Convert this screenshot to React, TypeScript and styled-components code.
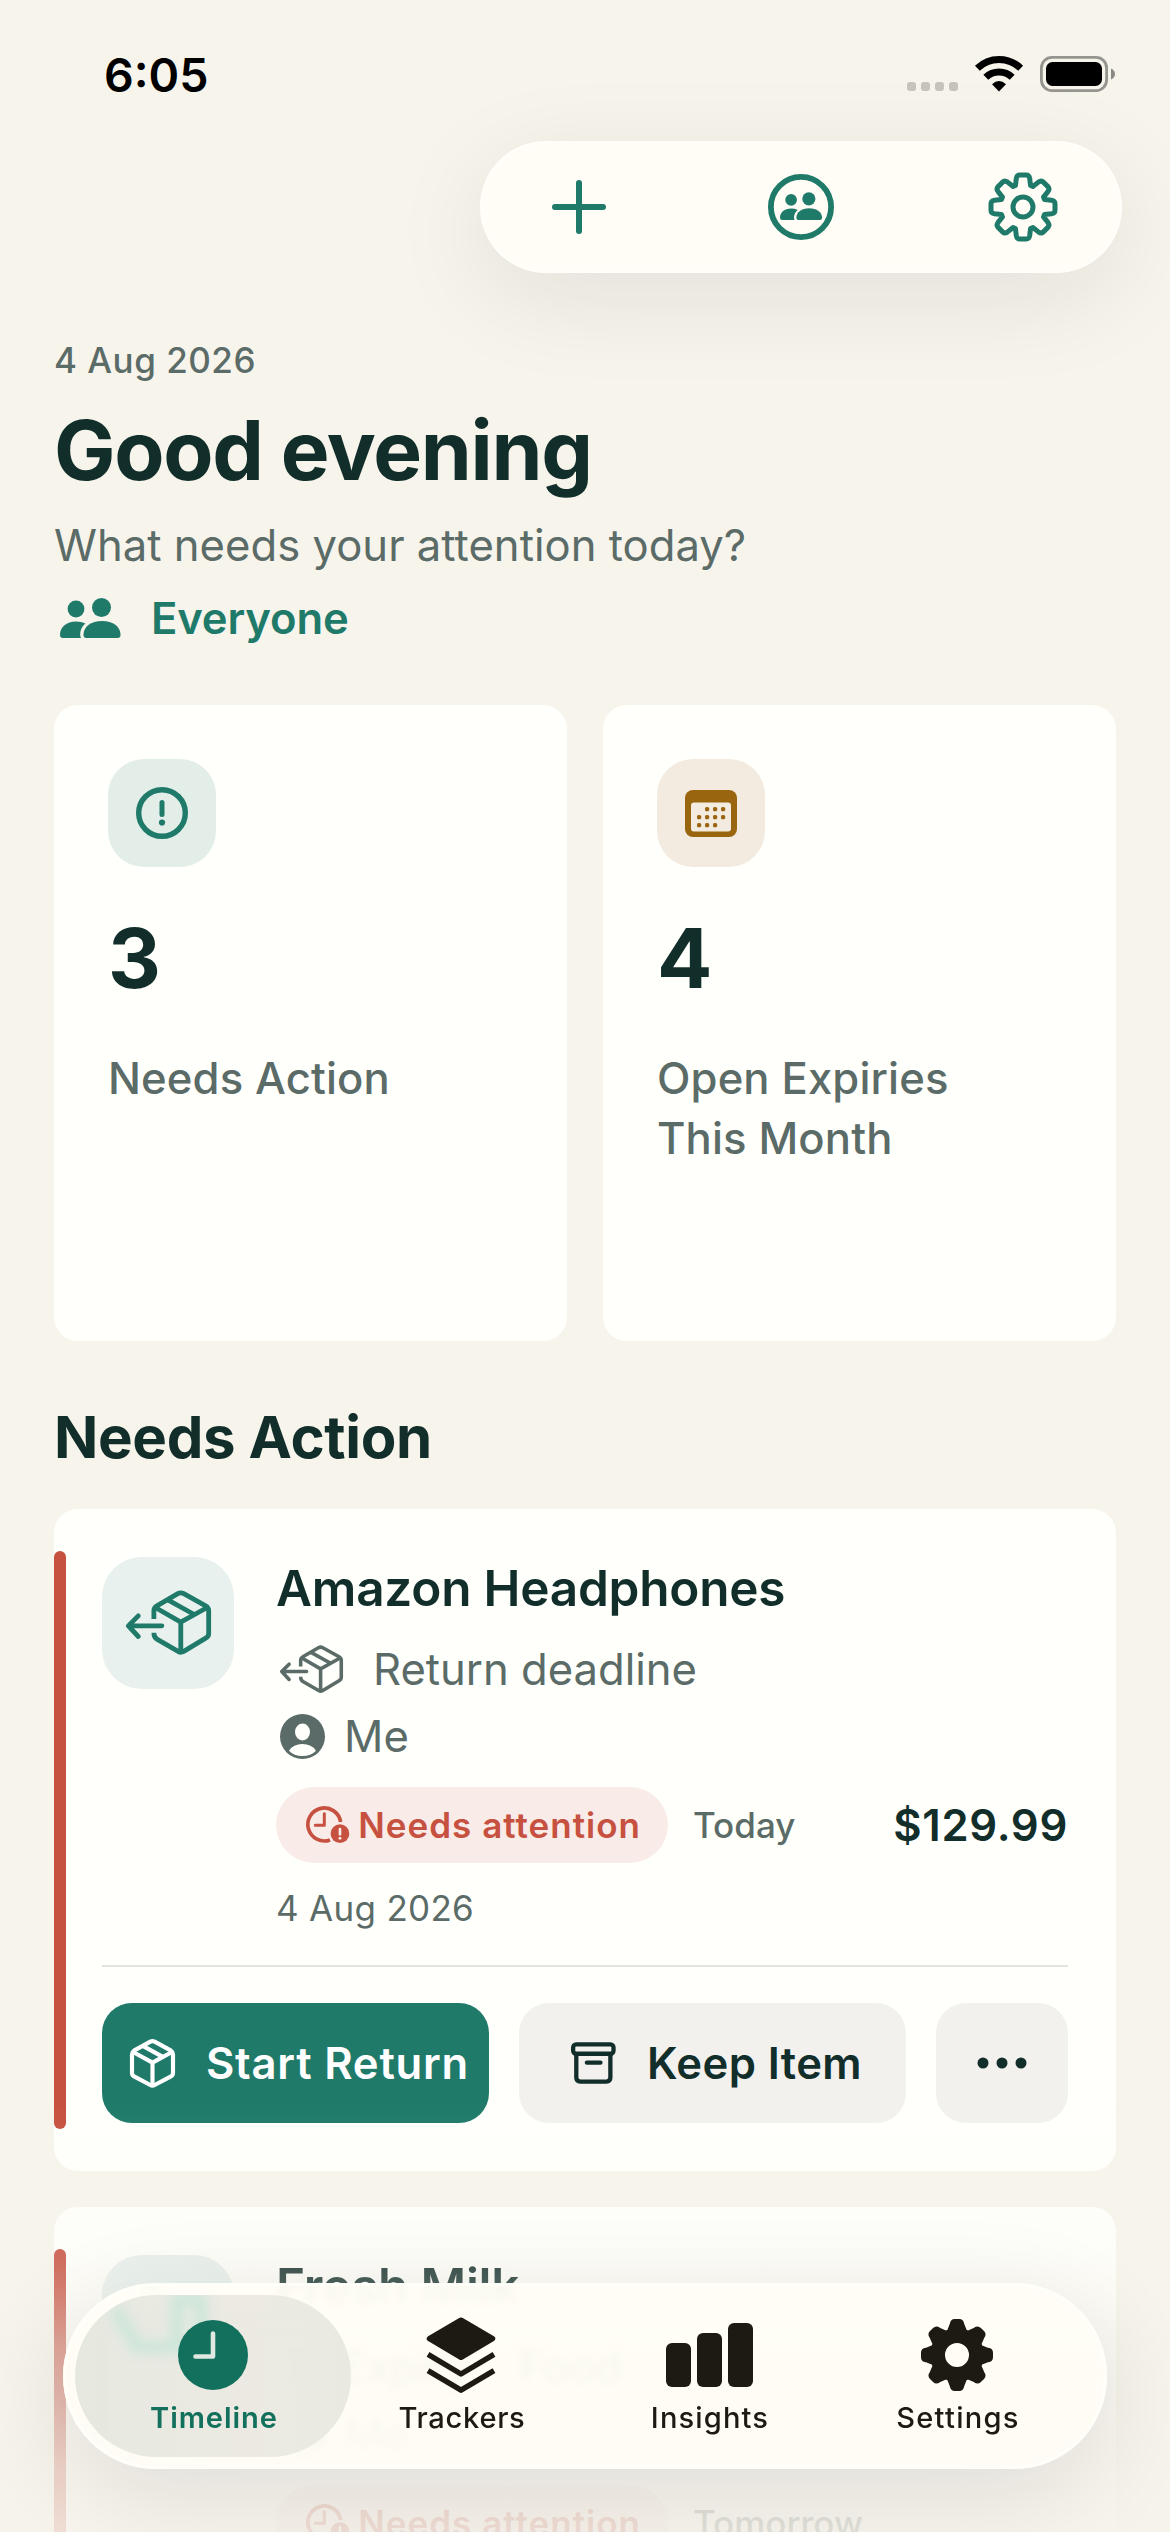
import React from "react";
import styled, { createGlobalStyle } from "styled-components";

const color = {
  page: "#f7f4ec",
  card: "#fffffb",
  glass: "#fffdf5",
  ink: "#122e2a",
  muted: "#5b6b67",
  green: "#1f7a6a",
  greenTint: "#e3eee9",
  greenTintSoft: "#e8f1ed",
  amber: "#99650f",
  amberTint: "#f3ebe0",
  red: "#c75140",
  redTint: "#f9ebe7",
  neutral: "#f3f1ee",
  tab: "#1c1a12",
  tabActive: "#12705d",
};

const GlobalStyle = createGlobalStyle`
  * { box-sizing: border-box; }
  html, body { margin: 0; padding: 0; background: ${color.page}; }
  body { font-family: "Inter", "Liberation Sans", sans-serif; color: ${color.ink}; }
  button { font: inherit; color: inherit; border: 0; padding: 0; background: none; }
  h1, h2, h3, p { margin: 0; }
  svg { display: block; flex: none; overflow: visible; }
`;

/* ---------- layout ---------- */

const Screen = styled.div`
  position: relative;
  width: 1170px;
  height: 2532px;
  overflow: hidden;
  background: ${color.page};
`;

const StatusBar = styled.header`
  display: flex;
  justify-content: space-between;
  height: 141px;
  padding: 45px 55px 0 104px;
`;

const Clock = styled.span`
  font-size: 46.5px;
  font-weight: 600;
  line-height: 60px;
  color: #000;
`;

const StatusIcons = styled.div`
  display: flex;
  align-items: flex-end;
  gap: 17px;
  height: 47px;
`;

const Toolbar = styled.nav`
  display: flex;
  align-items: center;
  justify-content: space-between;
  width: 642px;
  height: 132px;
  margin-left: 480px;
  padding: 0 34px;
  border-radius: 66px;
  background: ${color.glass};
  box-shadow: 0 24px 100px rgba(20, 20, 20, 0.085), inset 0 0 0 2px rgba(255, 255, 255, 0.4);
`;

const ToolButton = styled.button`
  display: grid;
  place-items: center;
  width: 130px;
  height: 132px;
  color: ${color.green};
`;

const Content = styled.main`
  display: flex;
  flex-direction: column;
  padding: 63px 54px 0;
`;

const Greeting = styled.section`
  position: relative;
  display: flex;
  flex-direction: column;
`;

const Today = styled.p`
  font-size: 35px;
  font-weight: 500;
  line-height: 48px;
  letter-spacing: 0.5px;
  color: ${color.muted};
`;

const Title = styled.h1`
  margin-top: 17px;
  font-size: 82px;
  font-weight: 700;
  line-height: 100px;
  letter-spacing: -1.3px;
`;

const Subtitle = styled.p`
  margin-top: 15px;
  font-size: 43.6px;
  line-height: 60px;
  letter-spacing: 0.02px;
  color: ${color.muted};
`;

const Audience = styled.button`
  display: flex;
  align-items: center;
  gap: 30px;
  height: 60px;
  margin-top: 12px;
  padding-left: 6px;
  font-size: 43.6px;
  font-weight: 600;
  letter-spacing: -0.15px;
  color: ${color.green};
`;

/* ---------- summary ---------- */

const SummaryGrid = styled.section`
  display: grid;
  grid-template-columns: 1fr 1fr;
  gap: 36px;
  margin-top: 57px;
`;

const SummaryCard = styled.article`
  display: flex;
  flex-direction: column;
  align-items: flex-start;
  height: 636px;
  padding: 54px;
  border-radius: 24px;
  background: ${color.card};
`;

const Tile = styled.div<{ $size: number; $bg: string; $fg: string }>`
  display: grid;
  place-items: center;
  flex: none;
  width: ${(p) => p.$size}px;
  height: ${(p) => p.$size}px;
  border-radius: ${(p) => (p.$size > 120 ? 40 : 36)}px;
  background: ${(p) => p.$bg};
  color: ${(p) => p.$fg};
`;

const Count = styled.strong`
  margin-top: 42px;
  font-size: 82px;
  font-weight: 700;
  line-height: 100px;
`;

const SummaryLabel = styled.p`
  width: 320px;
  margin-top: 40px;
  font-size: 43.6px;
  font-weight: 500;
  line-height: 60px;
  letter-spacing: 0.13px;
  color: ${color.muted};
`;

const SectionTitle = styled.h2`
  margin: 60px 0 36px;
  font-size: 58.2px;
  font-weight: 700;
  line-height: 72px;
  letter-spacing: -0.35px;
`;

/* ---------- entries ---------- */

const EntryList = styled.section`
  display: flex;
  flex-direction: column;
  gap: 36px;
`;

const EntryCard = styled.article`
  position: relative;
  height: 662px;
  padding: 48px;
  border-radius: 24px;
  background: ${color.card};

  &::before {
    content: "";
    position: absolute;
    left: 0;
    top: 42px;
    bottom: 42px;
    width: 12px;
    border-radius: 6px;
    background: ${color.red};
  }
`;

const EntryTop = styled.div`
  display: flex;
  gap: 42px;
`;

const EntryBody = styled.div`
  display: flex;
  flex-direction: column;
  flex: 1;
  padding-top: 1px;
`;

const EntryTitle = styled.h3`
  font-size: 49.5px;
  font-weight: 600;
  line-height: 60px;
  letter-spacing: -0.22px;
`;

const Meta = styled.div<{ $gap: number; $top: number }>`
  display: flex;
  align-items: center;
  gap: ${(p) => p.$gap}px;
  height: 60px;
  margin-top: ${(p) => p.$top}px;
  padding-left: 4px;
  font-size: 43.6px;
  color: ${color.muted};
`;

const Category = styled.span`
  margin-left: 20px;
`;

const StatusRow = styled.div`
  display: flex;
  align-items: center;
  height: 76px;
  margin-top: 21px;
`;

const Pill = styled.span`
  display: flex;
  align-items: center;
  gap: 9px;
  height: 76px;
  width: 392px;
  padding-left: 30px;
  border-radius: 38px;
  background: ${color.redTint};
  color: ${color.red};
  font-size: 35px;
  font-weight: 600;
  letter-spacing: 1px;
  white-space: nowrap;
`;

const Due = styled.span`
  margin-left: 25px;
  font-size: 35px;
  font-weight: 500;
  color: ${color.muted};
`;

const Amount = styled.span`
  margin-left: auto;
  font-size: 43.6px;
  font-weight: 600;
  letter-spacing: 0.7px;
`;

const EntryDate = styled.p`
  margin-top: 21px;
  font-size: 35px;
  line-height: 48px;
  letter-spacing: 0.3px;
  color: ${color.muted};
`;

const Divider = styled.hr`
  height: 2px;
  margin: 33px 0 36px;
  border: 0;
  background: #e2e2de;
`;

const Actions = styled.div`
  display: grid;
  grid-template-columns: 1fr 1fr 132px;
  gap: 30px;
`;

const ActionButton = styled.button<{ $primary?: boolean; $iconOnly?: boolean; $tracking?: number }>`
  display: flex;
  align-items: center;
  justify-content: center;
  gap: 31px;
  height: 120px;
  padding-left: ${(p) => (p.$iconOnly ? 0 : 8)}px;
  border-radius: 30px;
  background: ${(p) => (p.$primary ? color.green : color.neutral)};
  color: ${(p) => (p.$primary ? "#ffffff" : color.ink)};
  font-size: 43.6px;
  font-weight: 600;
  letter-spacing: ${(p) => p.$tracking ?? 0}px;
  white-space: nowrap;
`;

/* ---------- tab bar ---------- */

const BottomFade = styled.div`
  position: absolute;
  inset: auto 0 0 0;
  height: 432px;
  pointer-events: none;
  background: linear-gradient(
    rgba(246, 243, 235, 0) 0%,
    rgba(246, 243, 235, 0.14) 34%,
    rgba(246, 243, 235, 0.25) 42%,
    rgba(246, 243, 235, 0.52) 57%,
    rgba(246, 243, 235, 0.79) 84%,
    rgba(246, 243, 235, 0.87) 100%
  );
`;

const TabBar = styled.nav`
  position: absolute;
  left: 63px;
  bottom: 63px;
  display: flex;
  width: 1044px;
  height: 186px;
  padding: 12px;
  border-radius: 93px;
  background: linear-gradient(rgba(255, 253, 245, 0.96) 14%, rgba(255, 253, 245, 0.87) 30%);
  backdrop-filter: blur(4px);
  box-shadow: 0 24px 100px rgba(20, 20, 20, 0.11), inset 0 0 0 3px rgba(255, 255, 250, 0.8);
`;

const Tab = styled.button<{ $active?: boolean }>`
  position: relative;
  display: flex;
  flex-direction: column;
  align-items: center;
  gap: 7px;
  width: 276px;
  height: 162px;
  margin-right: -28px;
  padding-top: 22px;
  flex: none;
  border-radius: 81px;
  overflow: hidden;
  background: ${(p) =>
    p.$active ? "linear-gradient(90deg, rgba(229, 232, 223, 0.96), rgba(234, 232, 225, 0.93) 60%, rgba(231, 231, 224, 0.9))" : "none"};
  color: ${(p) => (p.$active ? color.tabActive : color.tab)};
`;

const TabIcon = styled.span`
  position: relative;
  display: grid;
  place-items: center;
  height: 76px;
`;

const TabLabel = styled.span<{ $active?: boolean; $tracking: number }>`
  position: relative;
  padding-left: 2px;
  font-size: 29.1px;
  font-weight: ${(p) => (p.$active ? 600 : 500)};
  line-height: 36px;
  letter-spacing: ${(p) => p.$tracking}px;
`;

const Refraction = styled.svg`
  position: absolute;
  left: 36px;
  top: 0;
  filter: blur(6px);
`;

/* ---------- icons ---------- */

const polar = (deg: number, r: number) => {
  const a = (deg * Math.PI) / 180;
  return [Math.sin(a) * r, -Math.cos(a) * r];
};

/* Eight-toothed gear centred on the origin. */
function gearPath(tip: number, valley: number, halfTip: number) {
  const rot = (x: number, y: number, k: number) => {
    const a = (k * Math.PI) / 4;
    const c = Math.cos(a);
    const s = Math.sin(a);
    return `${(x * c - y * s).toFixed(2)} ${(x * s + y * c).toFixed(2)}`;
  };
  const [vx, vy] = polar(19.3, valley);
  let d = "";
  for (let k = 0; k < 8; k++) {
    d += `${k ? "L" : "M"}${rot(-vx, vy, k)} L${rot(-halfTip - 0.5, -tip + 3.5, k)} Q${rot(-halfTip, -tip, k)} ${rot(-halfTip + 3, -tip, k)} `;
    d += `L${rot(halfTip - 3, -tip, k)} Q${rot(halfTip, -tip, k)} ${rot(halfTip + 0.5, -tip + 3.5, k)} L${rot(vx, vy, k)} `;
  }
  return d + "Z";
}

const GearOutline = () => (
  <svg width="70" height="70" viewBox="-35 -35 70 70" fill="none" stroke="currentColor" strokeWidth="5" strokeLinejoin="round">
    <path d={gearPath(32, 22.8, 6.2)} />
    <circle r="10" />
  </svg>
);

const GearSolid = () => (
  <svg width="72" height="72" viewBox="-36 -36 72 72">
    <path
      d={gearPath(34.5, 25.5, 5.2) + " M12 0 A12 12 0 1 0 -12 0 A12 12 0 1 0 12 0Z"}
      fill="currentColor"
      fillRule="evenodd"
    />
    <path d={gearPath(34.5, 25.5, 5.2)} fill="none" stroke="currentColor" strokeWidth="3" strokeLinejoin="round" />
  </svg>
);

const PlusIcon = () => (
  <svg width="54" height="54" viewBox="0 0 54 54" stroke="currentColor" strokeWidth="6" strokeLinecap="round">
    <path d="M27 3V51M3 27H51" />
  </svg>
);

const PeopleShapes = () => (
  <g fill="currentColor">
    <circle cx="16" cy="11" r="8.4" />
    <circle cx="41.5" cy="9.5" r="9.5" />
    <path d="M26.5 40Q23.5 40 23.5 36.8C23.5 28.5 31 23 42 23S60.5 28.5 60.5 36.8Q60.5 40 57.5 40Z" />
    <path d="M3 40Q0 40 0 36.8C0 29 6.5 23.5 16 23.5Q21.5 23.5 25.5 25.5C21.5 28.5 20.2 33 20.2 36.5Q20.2 38.5 21 40Z" />
  </g>
);

const PeopleIcon = () => (
  <svg width="61" height="40" viewBox="0 0 61 40">
    <PeopleShapes />
  </svg>
);

const PeopleCircleIcon = () => (
  <svg width="66" height="66" viewBox="0 0 66 66">
    <circle cx="33" cy="33" r="30.1" fill="none" stroke="currentColor" strokeWidth="5.8" />
    <g transform="translate(12 18.2) scale(.695)">
      <PeopleShapes />
    </g>
  </svg>
);

const AlertCircle = () => (
  <svg width="52" height="52" viewBox="-26 -26 52 52">
    <circle r="23.3" fill="none" stroke="currentColor" strokeWidth="5.4" />
    <path d="M0 -10.5V1.500" stroke="currentColor" strokeWidth="5" strokeLinecap="round" />
    <circle cy="9.5" r="3.1" fill="currentColor" />
  </svg>
);

const CalendarIcon = () => {
  const cols = [0, 8, 16, 24];
  const rows = [[1, 2, 3], [0, 1, 2, 3], [0, 1, 2]];
  return (
    <svg width="52" height="47" viewBox="0 0 52 47">
      <rect width="52" height="47" rx="8" fill="currentColor" />
      <rect x="6" y="12.5" width="40" height="29" rx="3" fill={color.amberTint} />
      {rows.map((row, y) =>
        row.map((c) => <rect key={`${y}${c}`} x={12 + cols[c]} y={17 + y * 8} width="4.2" height="4.2" rx="1.5" fill="currentColor" />)
      )}
    </svg>
  );
};

const ReturnBox = ({ width }: { width: number }) => (
  <svg
    width={width}
    height={(width * 196) / 256}
    viewBox="89 123 256 196"
    fill="none"
    stroke="currentColor"
    strokeWidth="14.5"
    strokeLinejoin="round"
  >
    <path d="M173 210V186Q173 176 182 171L245 134Q254 129 263 134L329 171Q338 176 338 186V254Q338 263 329 268L263 308Q254 313 246 308L182 271Q173 266 173 252" />
    <path d="M176 175L254 220L335 175M254 220V310M215 153L293 196" />
    <path d="M197 231H98M126 201L96 231L126 263" strokeLinecap="round" />
  </svg>
);

const BoxIcon = () => (
  <svg width="45" height="49" viewBox="57 87 135 147" fill="none" stroke="currentColor" strokeWidth="12.5" strokeLinejoin="round">
    <path d="M63 133Q63 126 69 122L118 95Q124 92 131 95L180 122Q186 126 186 133V189Q186 196 180 199L131 225Q124 229 118 225L69 199Q63 196 63 189Z" />
    <path d="M66 126L124.5 158L183 126M124.5 158V226M98 109L154 140" />
  </svg>
);

const ArchiveIcon = () => (
  <svg width="45" height="42" viewBox="1380 96 136 126" fill="none" stroke="currentColor" strokeWidth="13" strokeLinecap="round">
    <rect x="1386.5" y="103" width="122" height="28" rx="9" />
    <path d="M1396 133V203Q1396 215 1408 215H1487Q1499 215 1499 203V133" />
    <path d="M1428 158H1469" />
  </svg>
);

const PersonIcon = () => (
  <svg width="45" height="45" viewBox="555 492 135 135">
    <circle cx="622.5" cy="559.5" r="67.5" fill="currentColor" />
    <ellipse cx="622.5" cy="546" rx="22.5" ry="25.5" fill={color.card} />
    <path d="M582 602Q595 582 622 582Q650 582 663 602Q648 618 622 618Q597 618 582 602Z" fill={color.card} />
  </svg>
);

const ClockAlert = () => (
  <svg width="43.3" height="37.3" viewBox="633 767 130 112" fill="none" stroke="currentColor">
    <path d="M737 815A49.5 49.5 0 1 0 705 869" strokeWidth="11" />
    <path d="M688 790V825H661" strokeWidth="9" strokeLinecap="round" strokeLinejoin="round" />
    <circle cx="735" cy="850" r="28" fill="currentColor" stroke="none" />
    <path d="M735 836V852" stroke={color.redTint} strokeWidth="8" strokeLinecap="round" />
    <circle cx="735" cy="864" r="4.5" fill={color.redTint} stroke="none" />
  </svg>
);

const MoreIcon = () => (
  <svg width="50" height="12" viewBox="0 0 50 12" fill="currentColor">
    <circle cx="6" cy="6" r="5.5" />
    <circle cx="25" cy="6" r="5.5" />
    <circle cx="44" cy="6" r="5.5" />
  </svg>
);

const CartonIcon = () => (
  <svg width="64" height="76" viewBox="0 0 64 76" fill="none" stroke="currentColor" strokeWidth="5" strokeLinejoin="round">
    <path d="M10 4H22M40 34H60V72H6V34L14 16" />
  </svg>
);

const HourglassIcon = () => (
  <svg width="30" height="45" viewBox="0 0 30 45" fill="currentColor">
    <path d="M2 0H28V12L19 22L28 33V45H2V33L11 22L2 12Z" />
  </svg>
);

const TimelineIcon = () => (
  <svg width="70" height="70" viewBox="0 0 70 70" fill="none">
    <circle cx="35" cy="35" r="35" fill="currentColor" />
    <path d="M35 13.5V36.5H17.5" stroke="#e0e9e1" strokeWidth="4.6" strokeLinecap="round" strokeLinejoin="round" />
  </svg>
);

const StackIcon = () => (
  <svg width="70" height="76" viewBox="0 0 70 76" fill="none" stroke="currentColor" strokeWidth="5.5" strokeLinejoin="round">
    <path d="M35 3.2L66.5 21.7L35 40.3L3.5 21.7Z" fill="currentColor" />
    <path d="M2 37.3L35 57L68 37.3M2 53.6L35 73.2L68 53.6" />
  </svg>
);

const BarsIcon = () => (
  <svg width="87" height="76" viewBox="0 0 87 76" fill="currentColor">
    <rect y="26" width="25" height="44" rx="6" />
    <rect x="31" y="16" width="25" height="54" rx="6" />
    <rect x="62" y="6" width="25" height="64" rx="6" />
  </svg>
);

const SignalDots = () => (
  <svg width="51" height="10" viewBox="0 0 51 10" fill="#c6c3bb">
    {[0, 14, 28, 42].map((x) => (
      <rect key={x} x={x} y="0" width="9" height="9" rx="3" />
    ))}
  </svg>
);

const WifiIcon = () => (
  <svg width="48" height="37" viewBox="0 0 48 37" fill="none" stroke="#000" strokeWidth="7">
    <path d="M2.4 13.2A31 31 0 0 1 45.6 13.2" />
    <path d="M10.8 22.3A19 19 0 0 1 37.2 22.3" />
    <path d="M24 36.5L17 29.3Q24 22.5 31 29.3Z" fill="#000" stroke="none" />
  </svg>
);

const BatteryIcon = () => (
  <svg width="75" height="36" viewBox="0 0 75 36">
    <rect x="1.4" y="1.4" width="65.2" height="33.2" rx="10.5" fill="none" stroke="#96948e" strokeWidth="2.8" />
    <rect x="6" y="6" width="56" height="24" rx="6.5" fill="#000" />
    <path d="M71 12.5C76.3 14.5 76.3 21.5 71 23.5Z" fill="#8b8983" />
  </svg>
);

/* ---------- page ---------- */

const tabs = [
  { label: "Timeline", Icon: TimelineIcon, tracking: 0.94, active: true },
  { label: "Trackers", Icon: StackIcon, tracking: 0.7 },
  { label: "Insights", Icon: BarsIcon, tracking: 1.13 },
  { label: "Settings", Icon: GearSolid, tracking: 1.28 },
];

export default function App() {
  return (
    <>
      <GlobalStyle />
      <Screen>
        <StatusBar>
          <Clock>6:05</Clock>
          <StatusIcons>
            <SignalDots />
            <WifiIcon />
            <BatteryIcon />
          </StatusIcons>
        </StatusBar>

        <Toolbar>
          <ToolButton aria-label="Add">
            <PlusIcon />
          </ToolButton>
          <ToolButton aria-label="People">
            <PeopleCircleIcon />
          </ToolButton>
          <ToolButton aria-label="Preferences">
            <GearOutline />
          </ToolButton>
        </Toolbar>

        <Content>
          <Greeting>
            <Today>4 Aug 2026</Today>
            <Title>Good evening</Title>
            <Subtitle>What needs your attention today?</Subtitle>
            <Audience>
              <PeopleIcon />
              Everyone
            </Audience>
          </Greeting>

          <SummaryGrid>
            <SummaryCard>
              <Tile $size={108} $bg={color.greenTint} $fg={color.green}>
                <AlertCircle />
              </Tile>
              <Count>3</Count>
              <SummaryLabel>Needs Action</SummaryLabel>
            </SummaryCard>
            <SummaryCard>
              <Tile $size={108} $bg={color.amberTint} $fg={color.amber}>
                <CalendarIcon />
              </Tile>
              <Count>4</Count>
              <SummaryLabel>Open Expiries This Month</SummaryLabel>
            </SummaryCard>
          </SummaryGrid>

          <SectionTitle>Needs Action</SectionTitle>

          <EntryList>
            <EntryCard>
              <EntryTop>
                <Tile $size={132} $bg={color.greenTintSoft} $fg={color.green}>
                  <ReturnBox width={85} />
                </Tile>
                <EntryBody>
                  <EntryTitle>Amazon Headphones</EntryTitle>
                  <Meta $gap={30} $top={21}>
                    <ReturnBox width={63} />
                    Return deadline
                  </Meta>
                  <Meta $gap={19} $top={7}>
                    <PersonIcon />
                    Me
                  </Meta>
                  <StatusRow>
                    <Pill>
                      <ClockAlert />
                      Needs attention
                    </Pill>
                    <Due>Today</Due>
                    <Amount>$129.99</Amount>
                  </StatusRow>
                  <EntryDate>4 Aug 2026</EntryDate>
                </EntryBody>
              </EntryTop>
              <Divider />
              <Actions>
                <ActionButton $primary $tracking={0.8}>
                  <BoxIcon />
                  Start Return
                </ActionButton>
                <ActionButton $tracking={0.4}>
                  <ArchiveIcon />
                  Keep Item
                </ActionButton>
                <ActionButton $iconOnly aria-label="More">
                  <MoreIcon />
                </ActionButton>
              </Actions>
            </EntryCard>

            <EntryCard>
              <EntryTop>
                <Tile $size={132} $bg={color.greenTintSoft} $fg={color.green}>
                  <CartonIcon />
                </Tile>
                <EntryBody>
                  <EntryTitle>Fresh Milk</EntryTitle>
                  <Meta $gap={30} $top={21}>
                    <HourglassIcon />
                    <span>Expiry</span>
                    <Category>Food</Category>
                  </Meta>
                  <Meta $gap={19} $top={7}>
                    <PersonIcon />
                    Me
                  </Meta>
                  <StatusRow>
                    <Pill>
                      <ClockAlert />
                      Needs attention
                    </Pill>
                    <Due>Tomorrow</Due>
                  </StatusRow>
                </EntryBody>
              </EntryTop>
            </EntryCard>
          </EntryList>
        </Content>

        <BottomFade />

        <TabBar>
          {tabs.map(({ label, Icon, tracking, active }) => (
            <Tab key={label} $active={active}>
              {active && (
                <Refraction width="100" height="64" viewBox="0 0 100 64" fill="none" stroke="#cde6d9" strokeWidth="13" strokeLinejoin="round">
                  <path d="M4 14L26 52H66V4H90V52H60" />
                </Refraction>
              )}
              <TabIcon>
                <Icon />
              </TabIcon>
              <TabLabel $active={active} $tracking={tracking}>
                {label}
              </TabLabel>
            </Tab>
          ))}
        </TabBar>
      </Screen>
    </>
  );
}
